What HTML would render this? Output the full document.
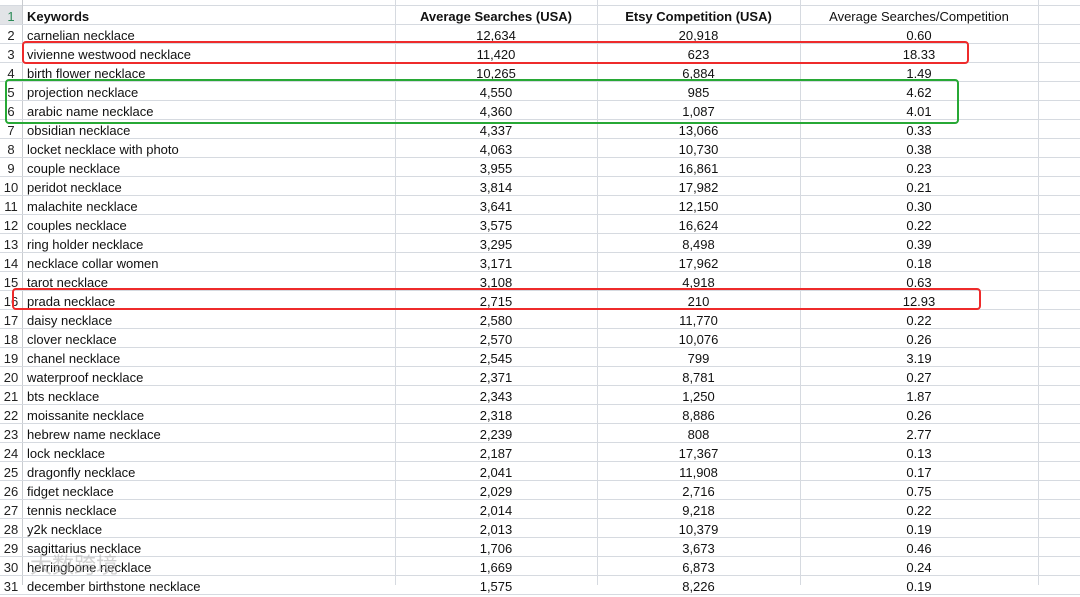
<!DOCTYPE html><html><head><style>
body{margin:0;width:1080px;height:585px;overflow:hidden;background:#fff;font-family:"Liberation Sans",Arial,sans-serif;font-size:13px;color:#111;position:relative}
.r{position:absolute;left:0;width:1080px;height:19px;border-bottom:1px solid #d6dae0;box-sizing:border-box;margin-top:1px}
.r div{position:absolute;top:0;height:18px;line-height:21px;white-space:nowrap}
.n{left:0;width:22px;text-align:center;color:#222}
.a{left:27px}
.b{left:395px;width:202px;text-align:center}
.c{left:597px;width:203px;text-align:center}
.d{left:800px;width:238px;text-align:center}
.v{position:absolute;top:0;bottom:0;width:1px;background:#d6dae0}
.box{position:absolute;border:2px solid;border-radius:4px;box-sizing:border-box}
</style></head><body>
<div class="r" style="top:-14px"></div>
<div class="v" style="left:22px;background:#c9ccd0"></div>
<div class="v" style="left:395px"></div>
<div class="v" style="left:597px"></div>
<div class="v" style="left:800px"></div>
<div class="v" style="left:1038px"></div>
<div class="r" style="top:5px"><div class="n" style="background:#e2e4e7;color:#2b8a57;width:22px">1</div><div class="a"><b>Keywords</b></div><div class="b"><b>Average Searches (USA)</b></div><div class="c"><b>Etsy Competition (USA)</b></div><div class="d">Average Searches/Competition</div></div>
<div class="r" style="top:24px"><div class="n">2</div><div class="a">carnelian necklace</div><div class="b">12,634</div><div class="c">20,918</div><div class="d">0.60</div></div>
<div class="r" style="top:43px"><div class="n">3</div><div class="a">vivienne westwood necklace</div><div class="b">11,420</div><div class="c">623</div><div class="d">18.33</div></div>
<div class="r" style="top:62px"><div class="n">4</div><div class="a">birth flower necklace</div><div class="b">10,265</div><div class="c">6,884</div><div class="d">1.49</div></div>
<div class="r" style="top:81px"><div class="n">5</div><div class="a">projection necklace</div><div class="b">4,550</div><div class="c">985</div><div class="d">4.62</div></div>
<div class="r" style="top:100px"><div class="n">6</div><div class="a">arabic name necklace</div><div class="b">4,360</div><div class="c">1,087</div><div class="d">4.01</div></div>
<div class="r" style="top:119px"><div class="n">7</div><div class="a">obsidian necklace</div><div class="b">4,337</div><div class="c">13,066</div><div class="d">0.33</div></div>
<div class="r" style="top:138px"><div class="n">8</div><div class="a">locket necklace with photo</div><div class="b">4,063</div><div class="c">10,730</div><div class="d">0.38</div></div>
<div class="r" style="top:157px"><div class="n">9</div><div class="a">couple necklace</div><div class="b">3,955</div><div class="c">16,861</div><div class="d">0.23</div></div>
<div class="r" style="top:176px"><div class="n">10</div><div class="a">peridot necklace</div><div class="b">3,814</div><div class="c">17,982</div><div class="d">0.21</div></div>
<div class="r" style="top:195px"><div class="n">11</div><div class="a">malachite necklace</div><div class="b">3,641</div><div class="c">12,150</div><div class="d">0.30</div></div>
<div class="r" style="top:214px"><div class="n">12</div><div class="a">couples necklace</div><div class="b">3,575</div><div class="c">16,624</div><div class="d">0.22</div></div>
<div class="r" style="top:233px"><div class="n">13</div><div class="a">ring holder necklace</div><div class="b">3,295</div><div class="c">8,498</div><div class="d">0.39</div></div>
<div class="r" style="top:252px"><div class="n">14</div><div class="a">necklace collar women</div><div class="b">3,171</div><div class="c">17,962</div><div class="d">0.18</div></div>
<div class="r" style="top:271px"><div class="n">15</div><div class="a">tarot necklace</div><div class="b">3,108</div><div class="c">4,918</div><div class="d">0.63</div></div>
<div class="r" style="top:290px"><div class="n">16</div><div class="a">prada necklace</div><div class="b">2,715</div><div class="c">210</div><div class="d">12.93</div></div>
<div class="r" style="top:309px"><div class="n">17</div><div class="a">daisy necklace</div><div class="b">2,580</div><div class="c">11,770</div><div class="d">0.22</div></div>
<div class="r" style="top:328px"><div class="n">18</div><div class="a">clover necklace</div><div class="b">2,570</div><div class="c">10,076</div><div class="d">0.26</div></div>
<div class="r" style="top:347px"><div class="n">19</div><div class="a">chanel necklace</div><div class="b">2,545</div><div class="c">799</div><div class="d">3.19</div></div>
<div class="r" style="top:366px"><div class="n">20</div><div class="a">waterproof necklace</div><div class="b">2,371</div><div class="c">8,781</div><div class="d">0.27</div></div>
<div class="r" style="top:385px"><div class="n">21</div><div class="a">bts necklace</div><div class="b">2,343</div><div class="c">1,250</div><div class="d">1.87</div></div>
<div class="r" style="top:404px"><div class="n">22</div><div class="a">moissanite necklace</div><div class="b">2,318</div><div class="c">8,886</div><div class="d">0.26</div></div>
<div class="r" style="top:423px"><div class="n">23</div><div class="a">hebrew name necklace</div><div class="b">2,239</div><div class="c">808</div><div class="d">2.77</div></div>
<div class="r" style="top:442px"><div class="n">24</div><div class="a">lock necklace</div><div class="b">2,187</div><div class="c">17,367</div><div class="d">0.13</div></div>
<div class="r" style="top:461px"><div class="n">25</div><div class="a">dragonfly necklace</div><div class="b">2,041</div><div class="c">11,908</div><div class="d">0.17</div></div>
<div class="r" style="top:480px"><div class="n">26</div><div class="a">fidget necklace</div><div class="b">2,029</div><div class="c">2,716</div><div class="d">0.75</div></div>
<div class="r" style="top:499px"><div class="n">27</div><div class="a">tennis necklace</div><div class="b">2,014</div><div class="c">9,218</div><div class="d">0.22</div></div>
<div class="r" style="top:518px"><div class="n">28</div><div class="a">y2k necklace</div><div class="b">2,013</div><div class="c">10,379</div><div class="d">0.19</div></div>
<div class="r" style="top:537px"><div class="n">29</div><div class="a">sagittarius necklace</div><div class="b">1,706</div><div class="c">3,673</div><div class="d">0.46</div></div>
<div class="r" style="top:556px"><div class="n">30</div><div class="a">herringbone necklace</div><div class="b">1,669</div><div class="c">6,873</div><div class="d">0.24</div></div>
<div class="r" style="top:575px"><div class="n">31</div><div class="a">december birthstone necklace</div><div class="b">1,575</div><div class="c">8,226</div><div class="d">0.19</div></div>
<div class="box" style="left:22px;top:41px;width:947px;height:23px;border-color:#ee2b2b"></div>
<div class="box" style="left:5px;top:79px;width:954px;height:45px;border-color:#27a835"></div>
<div class="box" style="left:12px;top:288px;width:969px;height:22px;border-color:#ee2b2b"></div>
<div style="position:absolute;left:30px;top:548px;font-family:'Noto Sans CJK SC',sans-serif;font-size:22px;color:rgba(180,180,180,0.6)">大数跨境</div>
</body></html>
